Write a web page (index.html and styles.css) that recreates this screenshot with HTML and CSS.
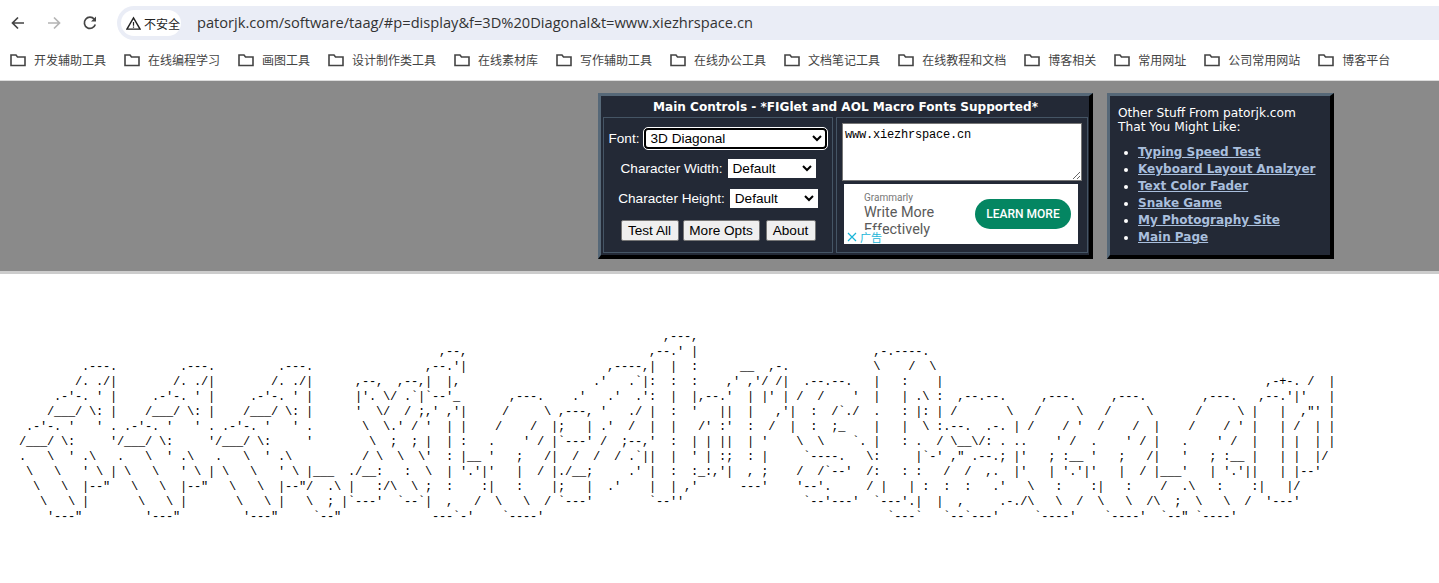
FILE: index.html
```html
<!DOCTYPE html>
<html lang="zh">
<head>
    <meta charset="UTF-8">
    <title>Text to ASCII Art Generator</title>
    <link rel="stylesheet" href="styles.css">
</head>
<body>
    <!-- browser chrome -->
    <div class="toolbar">
        <svg class="nav-icon" viewBox="0 0 16 16"><path d="M14 8H3M8 2.5 2.5 8 8 13.5" fill="none" stroke="#444" stroke-width="1.7"/></svg>
        <svg class="nav-icon" viewBox="0 0 16 16"><path d="M2 8h11M8 2.5 13.5 8 8 13.5" fill="none" stroke="#b4b4b4" stroke-width="1.7"/></svg>
        <svg class="nav-icon" viewBox="0 0 16 16"><path d="M13.3 9.5A5.6 5.6 0 1 1 12.3 4.2" fill="none" stroke="#444" stroke-width="1.7"/><path d="M14 1.5V6.5H9z" fill="#444"/></svg>
        <div class="address">
            <div class="chip">
                <svg class="warn" viewBox="0 0 16 16"><path d="M8 2 15 14H1z" fill="none" stroke="#222" stroke-width="1.5"/><path d="M8 6.5v4M8 11.3v1.3" stroke="#222" stroke-width="1.3"/></svg>
                <span>不安全</span>
            </div>
            <span class="url">patorjk.com/software/taag/#p=display&amp;f=3D%20Diagonal&amp;t=www.xiezhrspace.cn</span>
        </div>
    </div>

    <div class="bookmarks">
        <a class="mark"><svg viewBox="0 0 16 16"><path d="M1 3h5l1.5 2H15v8.5H1z" fill="none" stroke="#444" stroke-width="1.6"/></svg>开发辅助工具</a>
        <a class="mark"><svg viewBox="0 0 16 16"><path d="M1 3h5l1.5 2H15v8.5H1z" fill="none" stroke="#444" stroke-width="1.6"/></svg>在线编程学习</a>
        <a class="mark"><svg viewBox="0 0 16 16"><path d="M1 3h5l1.5 2H15v8.5H1z" fill="none" stroke="#444" stroke-width="1.6"/></svg>画图工具</a>
        <a class="mark"><svg viewBox="0 0 16 16"><path d="M1 3h5l1.5 2H15v8.5H1z" fill="none" stroke="#444" stroke-width="1.6"/></svg>设计制作类工具</a>
        <a class="mark"><svg viewBox="0 0 16 16"><path d="M1 3h5l1.5 2H15v8.5H1z" fill="none" stroke="#444" stroke-width="1.6"/></svg>在线素材库</a>
        <a class="mark"><svg viewBox="0 0 16 16"><path d="M1 3h5l1.5 2H15v8.5H1z" fill="none" stroke="#444" stroke-width="1.6"/></svg>写作辅助工具</a>
        <a class="mark"><svg viewBox="0 0 16 16"><path d="M1 3h5l1.5 2H15v8.5H1z" fill="none" stroke="#444" stroke-width="1.6"/></svg>在线办公工具</a>
        <a class="mark"><svg viewBox="0 0 16 16"><path d="M1 3h5l1.5 2H15v8.5H1z" fill="none" stroke="#444" stroke-width="1.6"/></svg>文档笔记工具</a>
        <a class="mark"><svg viewBox="0 0 16 16"><path d="M1 3h5l1.5 2H15v8.5H1z" fill="none" stroke="#444" stroke-width="1.6"/></svg>在线教程和文档</a>
        <a class="mark"><svg viewBox="0 0 16 16"><path d="M1 3h5l1.5 2H15v8.5H1z" fill="none" stroke="#444" stroke-width="1.6"/></svg>博客相关</a>
        <a class="mark"><svg viewBox="0 0 16 16"><path d="M1 3h5l1.5 2H15v8.5H1z" fill="none" stroke="#444" stroke-width="1.6"/></svg>常用网址</a>
        <a class="mark"><svg viewBox="0 0 16 16"><path d="M1 3h5l1.5 2H15v8.5H1z" fill="none" stroke="#444" stroke-width="1.6"/></svg>公司常用网站</a>
        <a class="mark"><svg viewBox="0 0 16 16"><path d="M1 3h5l1.5 2H15v8.5H1z" fill="none" stroke="#444" stroke-width="1.6"/></svg>博客平台</a>
    </div>

    <!-- page -->
    <div class="banner">
        <div class="panel main-panel">
            <div class="panel-title">Main Controls - *FIGlet and AOL Macro Fonts Supported*</div>
            <div class="cells">
                <div class="cell controls">
                    <div class="row">
                        <label>Font:</label>
                        <select class="font-select"><option>3D Diagonal</option></select>
                    </div>
                    <div class="row">
                        <label>Character Width:</label>
                        <select class="size-select"><option>Default</option></select>
                    </div>
                    <div class="row">
                        <label>Character Height:</label>
                        <select class="size-select"><option>Default</option></select>
                    </div>
                    <div class="buttons">
                        <button class="btn-test">Test All</button>
                        <button class="btn-opts">More Opts</button>
                        <button class="btn-about">About</button>
                    </div>
                </div>
                <div class="cell input-cell">
                    <textarea class="input-text">www.xiezhrspace.cn</textarea>
                    <div class="ad">
                        <div class="ad-copy">
                            <div class="ad-brand">Grammarly</div>
                            <div class="ad-line">Write More</div>
                            <div class="ad-line">Effectively</div>
                        </div>
                        <div class="ad-btn">LEARN MORE</div>
                        <div class="ad-tag">
                            <svg viewBox="0 0 10 10"><path d="M1 1 9 9M9 1 1 9" stroke="#19b5d8" stroke-width="1.2"/></svg>
                            <span>广告</span>
                        </div>
                    </div>
                </div>
            </div>
        </div>

        <div class="panel side-panel">
            <div class="side-intro">Other Stuff From patorjk.com<br>That You Might Like:</div>
            <ul class="side-links">
                <li><a>Typing Speed Test</a></li>
                <li><a>Keyboard Layout Analzyer</a></li>
                <li><a>Text Color Fader</a></li>
                <li><a>Snake Game</a></li>
                <li><a>My Photography Site</a></li>
                <li><a>Main Page</a></li>
            </ul>
        </div>
    </div>

<pre class="art">                                                                                              ,---,
                                                              ,--,                          ,--.' |                         ,-.----.
           .---.         .---.         .---.                ,--.'|                    ,----,|  |  :      __  ,-.            \    /  \
          /. ./|        /. ./|        /. ./|      ,--,  ,--,|  |,                   .'   .`|:  :  :    ,' ,'/ /|  .--.--.   |   :    |                                              ,-+-. /  |
       .-'-. ' |     .-'-. ' |     .-'-. ' |      |'. \/ .`|`--'_       ,---.    .'   .'  .':  |  |,--.'  | |' | /  /    '  |   | .\ :  ,--.--.     ,---.     ,---.        ,---.   ,--.'|'   |
      /___/ \: |    /___/ \: |    /___/ \: |      '  \/  / ;,' ,'|     /     \ ,---, '   ./ |  :  '   ||  |   ,'|  :  /`./  .   : |: | /       \   /     \   /     \      /     \ |   |  ,"' |
   .-'-. '   ' . .-'-. '   ' . .-'-. '   ' .       \  \.' / '  | |    /    /  |;   | .'  /  |  |   /' :'  :  /  |  :  ;_    |   |  \ :.--.  .-. | /    / '  /    /  |    /    / ' |   | /  | |
  /___/ \:     '/___/ \:     '/___/ \:     '        \  ;  ; |  | :   .    ' / |`---' /  ;--,'  :  | | ||  | '    \  \    `. |   : .  / \__\/: . ..    ' /  .    ' / |   .    ' /  |   | |  | |
  .   \  ' .\   .   \  ' .\   .   \  ' .\          / \  \  \'  : |__ '   ;   /|  /  /  / .`||  |  ' | :;  : |     `----.   \:     |`-' ," .--.; |'   ; :__ '   ;   /|   '   ; :__ |   | |  |/
   \   \   ' \ | \   \   ' \ | \   \   ' \ |___  ./__:   :  \  | '.'|'   |  / |./__;     .' |  :  :_:,'|  , ;    /  /`--'  /:   : :   /  /  ,.  |'   | '.'|'   |  / |___'   | '.'||   | |--'
    \   \  |--"   \   \  |--"   \   \  |--"/  .\ |   :/\  \ ;  :    :|   :    |;   |  .'    |  | ,'      ---'    '--'.     / |   | :  :  :   .'   \   :    :|   :    /  .\   :    :|   |/
     \   \ |       \   \ |       \   \ |   \  ; |`---'  `--`|  ,   /  \   \  / `---'        `--''                 `--'---'  `---'.|  |  ,     .-./\   \  /  \   \  /\  ;  \   \  /  '---'
      '---"         '---"         '---"     `--"             ---`-'    `----'                                                 `---`   `--`---'     `----'    `----'  `--" `----'</pre>
</body>
</html>
```

FILE: styles.css
```css
* {
    box-sizing: border-box;
}

body {
    margin: 0;
    background: #fff;
    font-family: "Liberation Sans", "Noto Sans CJK SC", sans-serif;
    overflow: hidden;
}

/* browser chrome */
.toolbar {
    height: 41px;
    display: flex;
    align-items: center;
    padding: 5px 0 0 10px;
    gap: 20px;
}

.nav-icon {
    width: 16px;
    height: 16px;
    flex: none;
}

.address {
    flex: 1;
    height: 34px;
    margin-left: -1px;
    display: flex;
    align-items: center;
    background: #eaedf6;
    border-radius: 17px 0 0 17px;
    padding-left: 4px;
    gap: 16px;
}

.chip {
    height: 26px;
    width: 60px;
    display: flex;
    align-items: center;
    gap: 3px;
    padding-left: 5px;
    background: #fff;
    border-radius: 13px;
    font-size: 12px;
    color: #222;
}

.warn {
    width: 15px;
    height: 15px;
    flex: none;
}

.url {
    font-family: "Open Sans", "Noto Sans", sans-serif;
    font-size: 14.65px;
    line-height: 32px;
    height: 34px;
    color: #333;
}

.bookmarks {
    height: 40px;
    display: flex;
    align-items: center;
    padding: 0 0 2px 10px;
    gap: 18px;
    border-bottom: 1px solid #dcdcdc;
}

.mark {
    display: flex;
    align-items: center;
    gap: 8px;
    font-size: 12px;
    color: #444;
    font-family: "Noto Sans CJK SC", sans-serif;
}

.mark svg {
    width: 16px;
    height: 16px;
}

/* grey header of the page */
.banner {
    height: 193px;
    display: flex;
    align-items: flex-start;
    gap: 14px;
    padding: 12px 0 0 598px;
    background: #8a8a8a;
    border-bottom: 3px solid #ccc;
}

.panel {
    height: 166px;
    background: #232936;
    border-style: solid;
    border-width: 3px 4px 4px 3px;
    border-color: #566878 #000 #000 #566878;
    color: #fff;
}

.main-panel {
    width: 495px;
    padding: 0 1px 0 2px;
}

.panel-title {
    height: 21px;
    line-height: 22px;
    text-align: center;
    font-family: "DejaVu Sans", sans-serif;
    font-weight: bold;
    font-size: 12.07px;
}

.cells {
    display: flex;
    gap: 3px;
}

.cell {
    height: 136px;
    border: 1px solid #455565;
}

.controls {
    width: 230px;
    padding-top: 5px;
    display: flex;
    flex-direction: column;
    align-items: center;
}

.row {
    height: 30px;
    display: flex;
    align-items: center;
    gap: 5px;
    font-size: 13.6px;
}

.row select {
    margin: 0;
    font-family: "Liberation Sans", sans-serif;
    font-size: 13.6px;
    background: #fff;
    border: 1px solid #fff;
    border-radius: 0;
    padding: 0;
}

.row .font-select {
    width: 183px;
    height: 21px;
    border: 2px solid #000;
    border-radius: 4px;
    outline: 1px solid #fff;
}

.row .size-select {
    width: 88px;
    height: 19px;
}

.buttons {
    margin-top: 7px;
    display: flex;
    gap: 4px;
}

.buttons button {
    height: 21px;
    margin: 0;
    padding: 0;
    font-family: "Liberation Sans", sans-serif;
    font-size: 13.6px;
    background: #efefef;
    border: 1px solid #767676;
    border-radius: 2px;
    color: #000;
}

.btn-test {
    width: 58px;
}

.btn-opts {
    width: 77px;
}

.buttons .btn-about {
    width: 50px;
    margin-left: 2px;
}

.input-cell {
    flex: 1;
    padding: 5px 5px 0 5px;
}

.input-text {
    display: block;
    width: 240px;
    height: 58px;
    margin: 0;
    padding: 4px 2px 2px;
    border: 1px solid #767676;
    background: #fff;
    font-family: "Liberation Mono", monospace;
    font-size: 12px;
    letter-spacing: -0.2px;
    resize: both;
}

.ad {
    position: relative;
    width: 234px;
    height: 60px;
    margin: 3px 0 0 2px;
    display: flex;
    align-items: center;
    padding-left: 20px;
    background: #fff;
    overflow: hidden;
}

.ad-copy {
    width: 111px;
    padding-top: 2px;
    color: #555;
    font-family: Roboto, sans-serif;
}

.ad-brand {
    font-size: 10px;
    line-height: 12px;
    color: #777;
}

.ad-line {
    font-size: 14.4px;
    line-height: 17px;
    color: #5a5a5a;
}

.ad-btn {
    width: 96px;
    height: 30px;
    line-height: 30px;
    text-align: center;
    background: #048662;
    border-radius: 15px;
    color: #fff;
    font-family: Roboto, sans-serif;
    font-weight: 500;
    font-size: 12px;
}

.ad-tag {
    position: absolute;
    left: 0;
    bottom: 0;
    width: 39px;
    height: 14px;
    display: flex;
    align-items: center;
    gap: 3px;
    padding-left: 3px;
    background: #fff;
    font-family: "Noto Sans CJK SC", sans-serif;
    font-size: 11px;
    line-height: 14px;
    color: #19b5d8;
}

.ad-tag svg {
    width: 10px;
    height: 10px;
    flex: none;
}

.side-panel {
    width: 227px;
    padding: 10px 0 0 8px;
    font-family: "DejaVu Sans", sans-serif;
}

.side-intro {
    font-size: 12.2px;
    line-height: 14px;
}

.side-links {
    margin: 10px 0 0;
    padding-left: 20px;
    font-size: 12px;
    font-weight: bold;
    line-height: 17px;
}

.side-links a {
    color: #a9bfdd;
    text-decoration: underline;
}

/* the generated ascii text */
.art {
    margin: 56px 0 0;
    padding-left: 5px;
    font-family: "Liberation Mono", monospace;
    font-size: 12px;
    letter-spacing: -0.2px;
    line-height: 15px;
    color: #000;
}
```
